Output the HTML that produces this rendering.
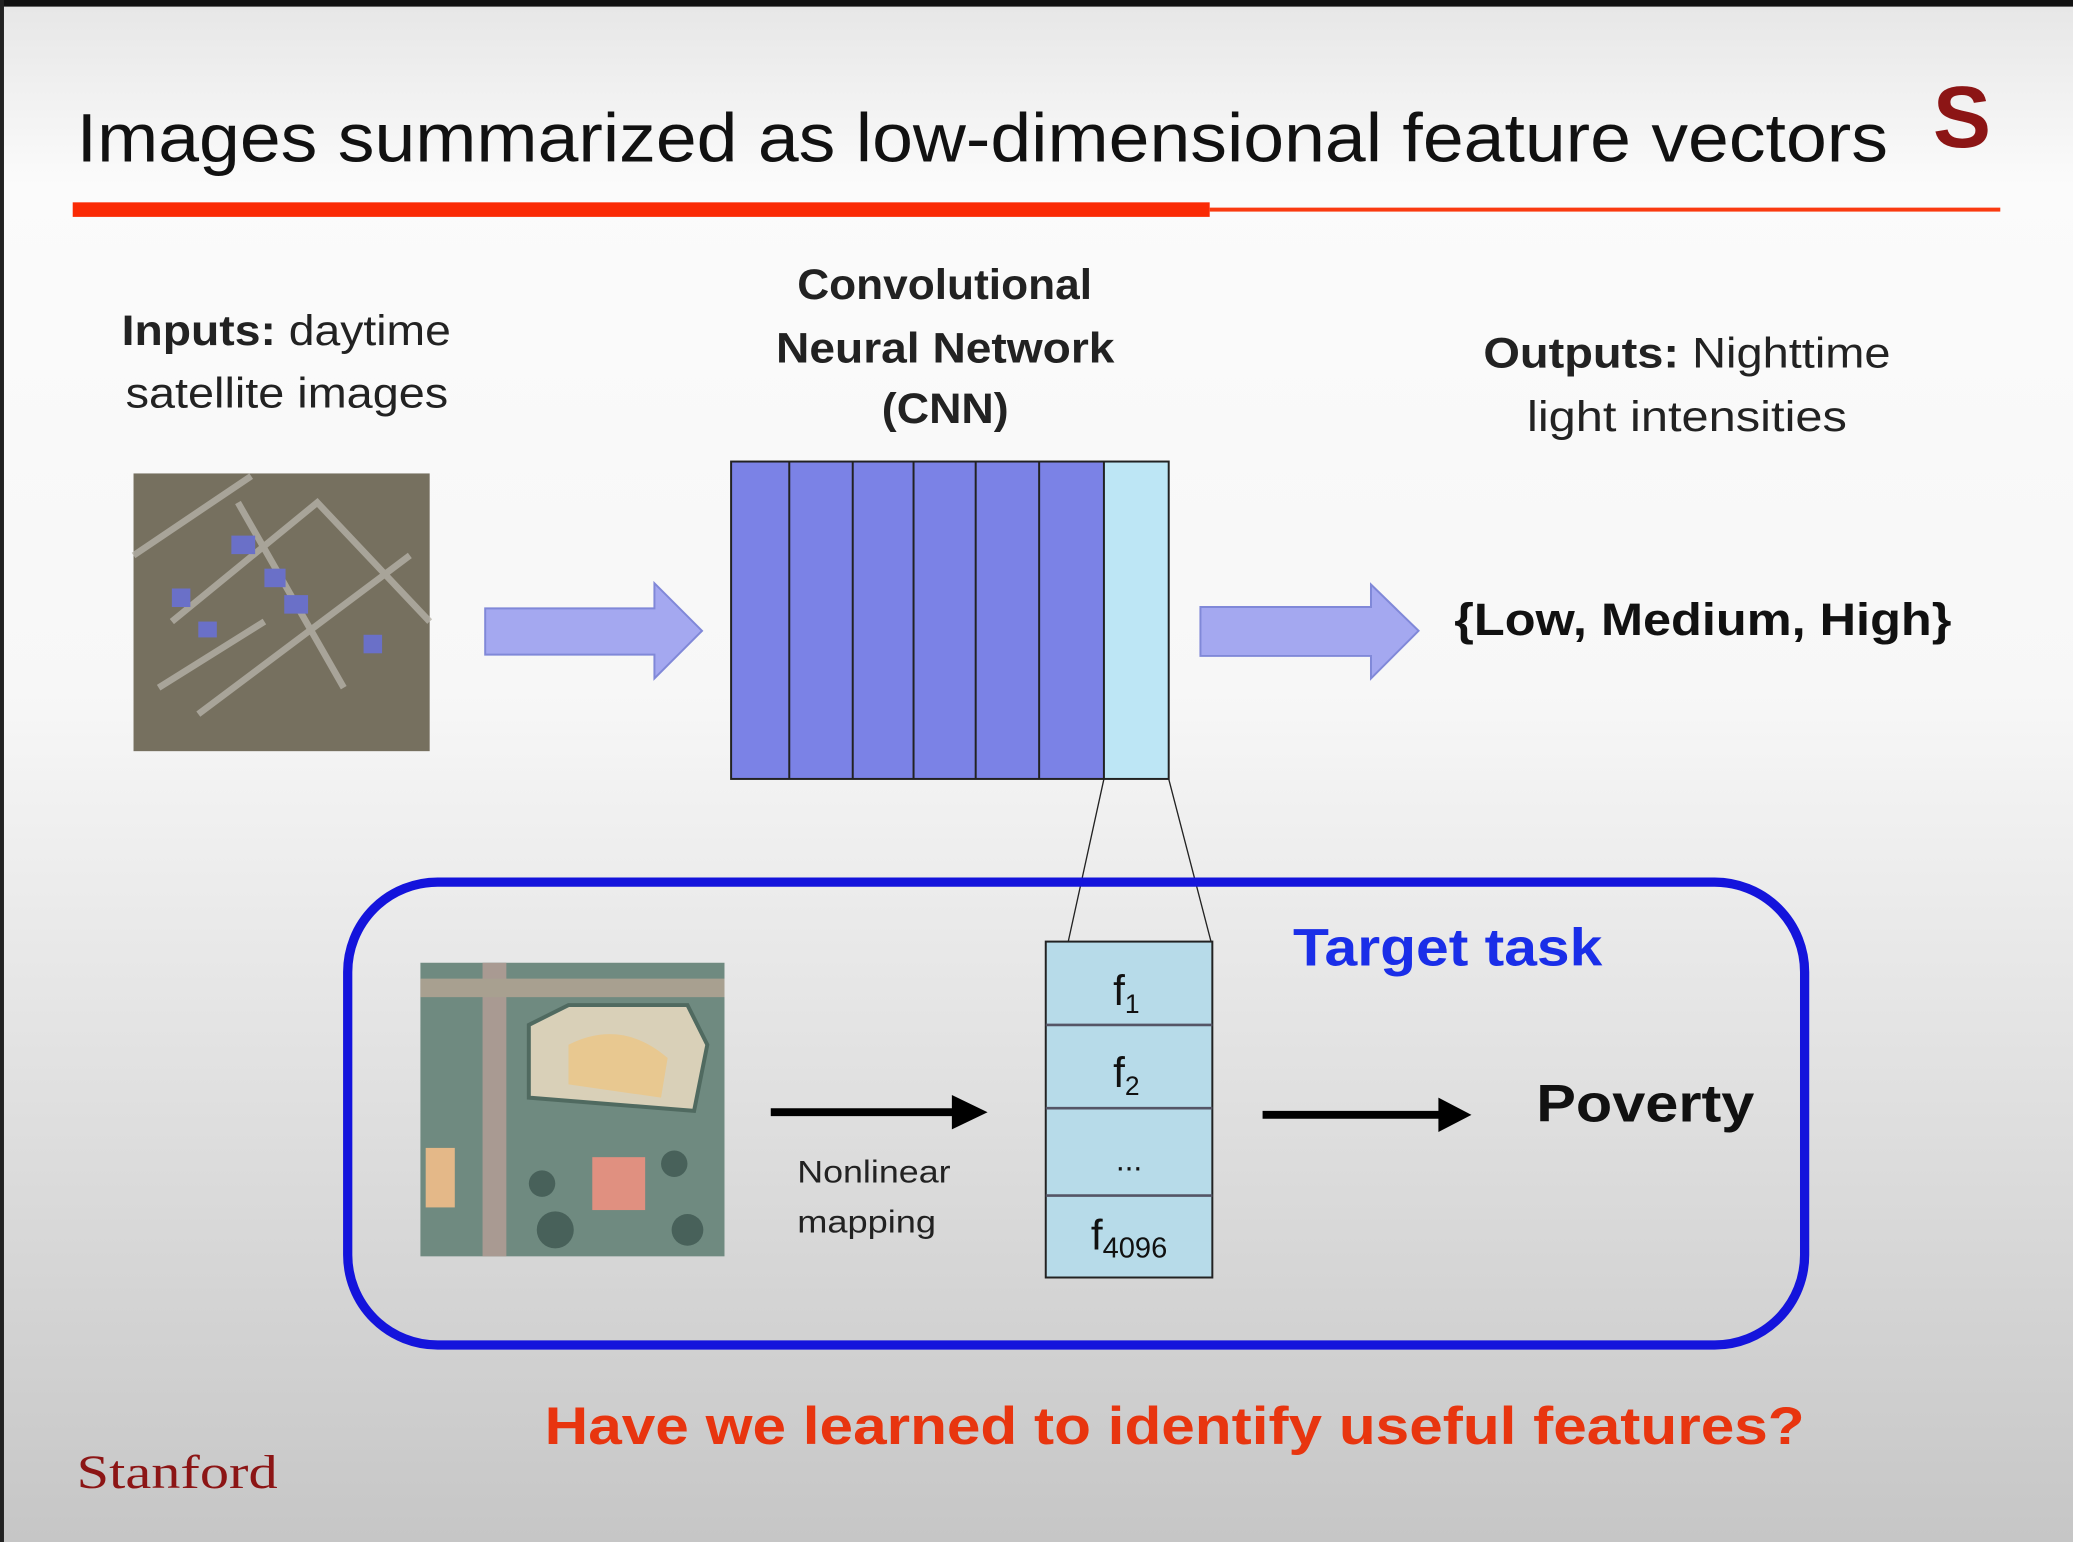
<!DOCTYPE html>
<html><head><meta charset="utf-8"><style>html,body{margin:0;padding:0;overflow:hidden;background:#ddd}svg{display:block}</style></head>
<body>
<svg width="2073" height="1542" viewBox="0 0 1568 1166" preserveAspectRatio="none" xmlns="http://www.w3.org/2000/svg" font-family="Liberation Sans, sans-serif">
<defs>
<linearGradient id="bg" x1="0" y1="0" x2="0" y2="1">
<stop offset="0" stop-color="#e6e6e6"/><stop offset="0.12" stop-color="#fbfbfb"/><stop offset="0.45" stop-color="#f7f7f7"/><stop offset="1" stop-color="#c6c6c6"/>
</linearGradient>
</defs>
<rect width="1568" height="1166" fill="url(#bg)"/>
<rect width="1568" height="5" fill="#111"/>
<rect width="3" height="1166" fill="#222"/>
<text x="58" y="122" font-size="52" textLength="1370" lengthAdjust="spacingAndGlyphs" fill="#111">Images summarized as low-dimensional feature vectors</text>
<text x="1462" y="111" font-size="66" font-weight="bold" fill="#8c1515" textLength="44" lengthAdjust="spacingAndGlyphs">S</text>
<rect x="55" y="153" width="860" height="11" fill="#fa2a05"/>
<rect x="915" y="157" width="598" height="3" fill="#fa3a10"/>
<g font-size="32" fill="#222">
<text x="92" y="261" textLength="249" lengthAdjust="spacingAndGlyphs"><tspan font-weight="bold">Inputs:</tspan> daytime</text>
<text x="95" y="308" textLength="244" lengthAdjust="spacingAndGlyphs">satellite images</text>
<text x="603" y="226" font-weight="bold" textLength="223" lengthAdjust="spacingAndGlyphs">Convolutional</text>
<text x="587" y="274" font-weight="bold" textLength="256" lengthAdjust="spacingAndGlyphs">Neural Network</text>
<text x="667" y="320" font-weight="bold" textLength="96" lengthAdjust="spacingAndGlyphs">(CNN)</text>
<text x="1122" y="278" textLength="308" lengthAdjust="spacingAndGlyphs"><tspan font-weight="bold">Outputs:</tspan> Nighttime</text>
<text x="1155" y="326" textLength="242" lengthAdjust="spacingAndGlyphs">light intensities</text>
</g>
<rect x="101" y="358" width="224" height="210" fill="#76705f"/>
<g stroke="#b5b2a8" stroke-width="5" fill="none" opacity="0.8">
<path d="M101 420 L190 360 M130 470 L240 380 L325 470 M150 540 L310 420 M180 380 L260 520 M120 520 L200 470"/>
</g>
<g fill="#6a70c8"><rect x="175" y="405" width="18" height="14"/><rect x="200" y="430" width="16" height="14"/><rect x="130" y="445" width="14" height="14"/><rect x="215" y="450" width="18" height="14"/><rect x="150" y="470" width="14" height="12"/><rect x="275" y="480" width="14" height="14"/></g>
<path d="M367 460 H495 V441 L531 477 L495 513 V495 H367 Z" fill="#a4a8f0" stroke="#8088d8" stroke-width="1.5"/>
<rect x="553" y="349" width="282" height="240" fill="#7b82e6"/>
<rect x="835" y="349" width="49" height="240" fill="#bde6f5"/>
<g stroke="#222" stroke-width="1.5" fill="none">
<rect x="553" y="349" width="331" height="240"/>
<path d="M597 349V589M645 349V589M691 349V589M738 349V589M786 349V589M835 349V589"/>
<path d="M835 589 L808 712 M884 589 L916 712" stroke-width="1"/>
</g>
<path d="M908 459 H1037 V442 L1073 477 L1037 513 V496 H908 Z" fill="#a4a8f0" stroke="#8088d8" stroke-width="1.5"/>
<text x="1100" y="480" font-size="34" font-weight="bold" fill="#111" textLength="376" lengthAdjust="spacingAndGlyphs">{Low, Medium, High}</text>
<rect x="263" y="667" width="1102" height="350" rx="68" fill="none" stroke="#1414dc" stroke-width="7"/>
<rect x="318" y="728" width="230" height="222" fill="#6f8a80"/>
<rect x="365" y="728" width="18" height="222" fill="#a99a92"/>
<rect x="318" y="740" width="230" height="14" fill="#a8a090"/>
<path d="M400 775 L430 760 L520 760 L535 790 L525 840 L400 830 Z" fill="#d9d0b8" stroke="#506a60" stroke-width="3"/>
<path d="M430 790 Q470 770 505 800 L500 830 L430 820Z" fill="#e8c890"/>
<rect x="448" y="875" width="40" height="40" fill="#e09080"/>
<rect x="322" y="868" width="22" height="45" fill="#e4b888"/>
<g fill="#38504a" opacity="0.7"><circle cx="420" cy="930" r="14"/><circle cx="520" cy="930" r="12"/><circle cx="410" cy="895" r="10"/><circle cx="510" cy="880" r="10"/></g>
<path d="M583 841 H722" stroke="#000" stroke-width="6"/><path d="M720 828 L747 841 L720 854Z" fill="#000"/>
<path d="M955 843 H1090" stroke="#000" stroke-width="6"/><path d="M1088 830 L1113 843 L1088 856Z" fill="#000"/>
<text x="603" y="894" font-size="24" fill="#222" textLength="116" lengthAdjust="spacingAndGlyphs">Nonlinear</text>
<text x="603" y="932" font-size="24" fill="#222" textLength="105" lengthAdjust="spacingAndGlyphs">mapping</text>
<rect x="791" y="712" width="126" height="254" fill="#b7dbe9" stroke="#222" stroke-width="1.5"/>
<g stroke="#556" stroke-width="2"><path d="M791 775H917M791 838H917M791 904H917"/></g>
<g font-size="32" fill="#111" text-anchor="middle">
<text x="852" y="760">f<tspan font-size="20" dy="6">1</tspan></text>
<text x="852" y="822">f<tspan font-size="20" dy="6">2</tspan></text>
<text x="854" y="885" font-size="24">...</text>
<text x="854" y="945">f<tspan font-size="22" dy="6">4096</tspan></text>
</g>
<text x="978" y="730" font-size="40" font-weight="bold" fill="#1a2ee8" textLength="234" lengthAdjust="spacingAndGlyphs">Target task</text>
<text x="1162" y="848" font-size="40" font-weight="bold" fill="#111" textLength="165" lengthAdjust="spacingAndGlyphs">Poverty</text>
<text x="412" y="1092" font-size="40" font-weight="bold" fill="#e8350f" textLength="953" lengthAdjust="spacingAndGlyphs">Have we learned to identify useful features?</text>
<text x="58" y="1125" font-size="36" font-family="Liberation Serif, serif" fill="#8c1515" textLength="152" lengthAdjust="spacingAndGlyphs">Stanford</text>
</svg>
</body></html>
